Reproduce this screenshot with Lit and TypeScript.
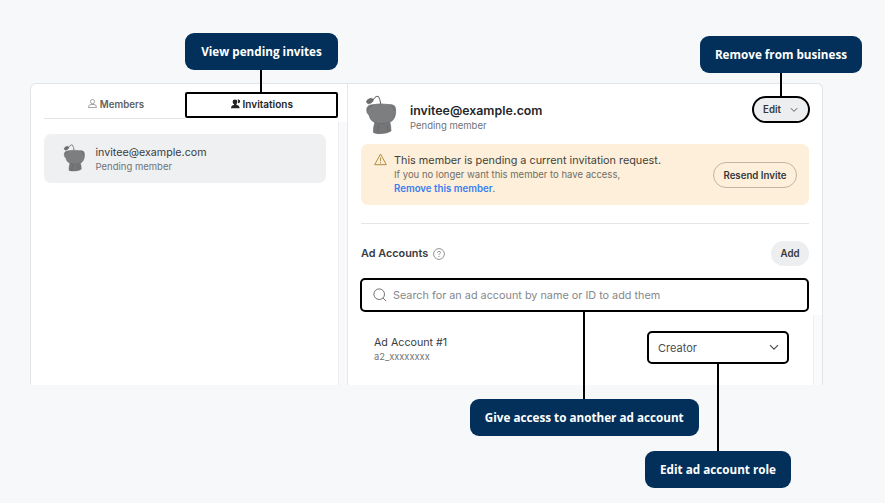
import { LitElement, html, css, svg } from "lit";
import { customElement, property } from "lit/decorators.js";

@customElement("snoo-avatar")
export class SnooAvatar extends LitElement {
  static styles = css`
    :host { display: block; }
    svg { display: block; width: 100%; height: 100%; }
  `;
  render() {
    return html`<svg viewBox="0 0 32 40">
      <path d="M7.500 4.800 Q9.400 4.200 10 2.300 Q12 .8 13.400 1.400 Q15 4 15.800 9" fill="none" stroke="#5b5c5e" stroke-width="1" stroke-linejoin="round"/>
      <ellipse cx="4.900" cy="6" rx="3.500" ry="2.300" transform="rotate(-28 4.900 6)" fill="#6d6e70" stroke="#58595b" stroke-width=".5"/>
      <path d="M10 27 Q8.400 31 8.400 37.400 Q12 39.400 17 38.400 Q22 38.600 26 36 Q26 31 24.500 26Z" fill="#757678" stroke="#5f6062" stroke-width=".6"/>
      <path d="M2.400 12 Q3.800 9.600 8 9.700 Q15 8.200 23 9.500 Q28 9.200 29.800 11.200 Q31 13.500 30.600 18 Q30.200 23.600 26.500 26.300 Q22 29 15 28.600 Q9 28.400 5.800 24.500 Q4.500 22 4 20 Q1.800 18.800 1.800 15.800 Q1.600 13.300 2.400 12Z" fill="#7d7e80" stroke="#66676a" stroke-width=".7"/>
      <path d="M2.600 14.800 Q3.700 12 7.500 10.500 M26 10.500 Q28.800 12 29.400 16 M13.500 30 L12.500 37 M22 30 L23 36.500" fill="none" stroke="#626366" stroke-width=".7"/>
    </svg>`;
  }
}

@customElement("call-out")
export class CallOut extends LitElement {
  @property() label = "";
  static styles = css`
    :host {
      position: absolute;
      box-sizing: border-box;
      height: 37px;
      padding-bottom: 2px;
      display: flex;
      align-items: center;
      justify-content: center;
      border-radius: 9px;
      background: #02305a;
      color: #fff;
      font: 700 11.700px/16px "Open Sans", "Noto Sans", sans-serif;
      white-space: nowrap;
    }
  `;
  render() {
    return html`<span>${this.label}</span>`;
  }
}

const chevron = svg`<path d="M1 1.200 L5 5.200 L9 1.200" fill="none" stroke="currentColor" stroke-width="1.200"/>`;

@customElement("app-root")
export class AppRoot extends LitElement {
  static styles = css`
    :host {
      display: block;
      position: relative;
      box-sizing: border-box;
      width: 885px;
      height: 503px;
      padding: 83px 62px 0 30px;
      overflow: hidden;
      background: #f7f8fa;
      font-family: Inter, "Liberation Sans", sans-serif;
      color: #393c3f;
      white-space: nowrap;
    }
    svg { display: block; flex: none; }
    .panel {
      box-sizing: border-box;
      width: 793px;
      height: 302px;
      display: flex;
      border: 1px solid #e2e5e8;
      border-bottom: 0;
      border-radius: 6px 6px 0 0;
      background: #fff;
      overflow: hidden;
    }
    .side { width: 307px; padding: 8px 0 0 12.500px; box-sizing: border-box; }
    .gutter {
      box-sizing: border-box;
      width: 11px;
      border-right: 1px solid #e6e8ea;
      padding-top: 38px;
      display: flex;
    }
    .gutter-fill { flex: 1; border-left: 1px solid #ebedef; background: #f9f9fb; }
    .tabs { display: flex; width: 295px; height: 27px; }
    .tab {
      box-sizing: border-box;
      display: flex;
      align-items: center;
      justify-content: center;
      gap: 3px;
      font-size: 9.700px;
      line-height: 14px;
      font-weight: 600;
    }
    .members { width: 141px; border-bottom: 1px solid #e3e6e8; color: #5c5f62; padding: 0 0 2px 4px; }
    .members span { padding-top: 1px; }
    .members svg { margin-bottom: 1px; }
    .invitations {
      flex: none;
      width: 153.500px;
      height: 26px;
      border: 2px solid #000;
      border-radius: 2px;
      color: #222426;
      padding: 0 0 2px 1px;
      font-size: 10px;
      gap: 2px;
    }
    .person {
      box-sizing: border-box;
      display: flex;
      align-items: center;
      width: 282.500px;
      height: 49px;
      margin-top: 15px;
      padding-left: 19.500px;
      border-radius: 7px;
      background: #eef0f2;
    }
    .person snoo-avatar { width: 22.500px; height: 28px; margin: -1px 10px 0 0; }
    .name { font-size: 10.700px; line-height: 15px; }
    .sub { font-size: 9.500px; line-height: 13px; color: #707376; }
    .main { flex: 1; padding: 11px 12px 0 13px; display: flex; flex-direction: column; position: relative; }
    .head { display: flex; height: 49px; align-items: flex-start; width: 449px; }
    .head snoo-avatar { width: 32px; height: 40px; margin-left: 4px; }
    .head .who { margin: 7px 0 0 13px; flex: 1; }
    .head .name { font-size: 12.350px; line-height: 17px; font-weight: 600; color: #242628; }
    .head .sub { line-height: 13px; }
    .pill {
      box-sizing: border-box;
      display: flex;
      align-items: center;
      justify-content: center;
      border-radius: 14px;
      background: #eceef0;
      font-size: 9.700px;
      line-height: 14px;
      font-weight: 600;
      color: #35383a;
    }
    .edit { width: 58px; height: 27px; border: 2px solid #000; gap: 9px; margin-top: 1px; padding-right: 1px; }
    .edit svg { color: #55585b; }
    .notice {
      box-sizing: border-box;
      display: flex;
      width: 448px;
      height: 61px;
      padding: 9px 12px 0 12.500px;
      border-radius: 7px;
      background: #fdefda;
    }
    .notice .copy { flex: 1; margin-left: 7.500px; font-size: 9.500px; line-height: 14px; color: #716e66; }
    .notice .title { font-size: 10.850px; line-height: 14px; padding-bottom: 1px; color: #444239; }
    .notice .link { font-size: 9.700px; }
    .notice b { color: #3b7df0; font-weight: 600; }
    .resend { width: 84px; height: 26px; margin-top: 9px; padding-top: 1px; background: transparent; border: 1px solid #bfb5a5; }
    .rule { height: 1px; width: 448px; margin-top: 18px; background: #e3e6e8; }
    .section { display: flex; align-items: center; height: 25px; margin-top: 17px; width: 448px; gap: 5px; }
    .section .heading { font-size: 10.850px; font-weight: 600; padding-bottom: 1px; }
    .add { width: 38px; height: 25px; margin-left: auto; padding-top: 1px; }
    .search {
      box-sizing: border-box;
      display: flex;
      align-items: center;
      width: 449px;
      height: 34px;
      margin: 12px 0 0 -1px;
      padding-left: 11px;
      gap: 6px;
      border: 2px solid #000;
      border-radius: 5px;
      font-size: 10.830px;
      color: #85888b;
    }
    .account { display: flex; width: 428px; margin-top: 19px; padding-left: 13px; box-sizing: border-box; }
    .account .info { flex: 1; padding-top: 4px; }
    .account .sub { font-size: 9.300px; line-height: 14px; }
    .select {
      box-sizing: border-box;
      display: flex;
      align-items: center;
      justify-content: space-between;
      width: 142px;
      height: 33px;
      padding: 0 8px 0 9px;
      border: 2px solid #000;
      border-radius: 5px;
      font-size: 11px;
      color: #4a4d50;
    }
    .track {
      position: absolute;
      right: 0;
      top: 231px;
      bottom: 0;
      width: 9px;
      box-sizing: border-box;
      border-left: 1px solid #efefef;
      background: #fafafa;
    }
    .line { position: absolute; width: 2px; background: #000; }
    .l1 { left: 260px; top: 69px; height: 24px; }
    .l2 { left: 780px; top: 72px; height: 25px; }
    .l3 { left: 583px; top: 311px; height: 89px; }
    .l4 { left: 717px; top: 363px; height: 89px; }
    .c1 { left: 185px; top: 33px; width: 153px; }
    .c2 { left: 700px; top: 36px; width: 162px; }
    .c3 { left: 469.500px; top: 399px; width: 229.500px; }
    .c4 { left: 645px; top: 451px; width: 146px; }
  `;

  render() {
    return html`
      <div class="panel">
        <div class="side">
          <div class="tabs">
            <div class="tab members">
              <svg width="9" height="9" viewBox="0 0 9 9" fill="none" stroke="#8b8e90" stroke-width=".8">
                <circle cx="4.500" cy="2.600" r="2.100"/>
                <path d="M.5 8.500 Q.5 5.500 3 5.500 H6 Q8.500 5.500 8.500 8.500Z"/>
              </svg>
              <span>Members</span>
            </div>
            <div class="tab invitations">
              <svg width="10" height="10" viewBox="0 0 10 10" fill="#222426">
                <circle cx="4" cy="3" r="2.400"/>
                <path d="M0 9.300 Q0 6.200 3 6 V5 H5.500 V6 Q8.600 6.200 8.600 9.300Z"/>
                <path d="M6.600 .5 Q9.200 .2 9.200 2.300 Q9.200 4.400 6.900 4.300 Q7.600 2.400 6.600 .5Z"/>
              </svg>
              <span>Invitations</span>
            </div>
          </div>
          <div class="person">
            <snoo-avatar></snoo-avatar>
            <div>
              <div class="name">invitee@example.com</div>
              <div class="sub">Pending member</div>
            </div>
          </div>
        </div>
        <div class="gutter"><div class="gutter-fill"></div></div>
        <div class="main">
          <div class="head">
            <snoo-avatar></snoo-avatar>
            <div class="who">
              <div class="name">invitee@example.com</div>
              <div class="sub">Pending member</div>
            </div>
            <div class="pill edit"><span>Edit</span><svg width="8" height="6" viewBox="0 0 10 7">${chevron}</svg></div>
          </div>
          <div class="notice">
            <svg width="13" height="13" viewBox="0 0 13 13" fill="none" stroke="#b08c3e" stroke-width="1">
              <path d="M6.500 1 L12.300 11.700 H.7Z" stroke-linejoin="round"/>
              <path d="M6.500 4.500 V8.300 M6.500 9.200 V10.400"/>
            </svg>
            <div class="copy">
              <div class="title">This member is pending a current invitation request.</div>
              <div class="text">If you no longer want this member to have access,</div>
              <div class="link"><b>Remove this member</b>.</div>
            </div>
            <div class="pill resend">Resend Invite</div>
          </div>
          <div class="rule"></div>
          <div class="section">
            <span class="heading">Ad Accounts</span>
            <svg width="12" height="12" viewBox="0 0 12 12" fill="none" stroke="#85888b" stroke-width=".9">
              <circle cx="6" cy="6" r="5.400"/>
              <path d="M4.500 4.800 Q4.500 3.400 6 3.400 Q7.500 3.400 7.500 4.600 Q7.500 5.400 6.600 5.800 Q6 6.100 6 7.100 M6 8 V9"/>
            </svg>
            <div class="pill add">Add</div>
          </div>
          <div class="search">
            <svg width="14" height="14" viewBox="0 0 14 14" fill="none" stroke="#6d7073" stroke-width="1">
              <circle cx="6.200" cy="6.200" r="5.300"/>
              <path d="M10 10 L13.200 13.200"/>
            </svg>
            <span>Search for an ad account by name or ID to add them</span>
          </div>
          <div class="account">
            <div class="info">
              <div class="name">Ad Account #1</div>
              <div class="sub">a2_xxxxxxxx</div>
            </div>
            <div class="select"><span>Creator</span><svg width="10" height="7" viewBox="0 0 10 7">${chevron}</svg></div>
          </div>
          <div class="track"></div>
        </div>
      </div>
      <div class="line l1"></div>
      <div class="line l2"></div>
      <div class="line l3"></div>
      <div class="line l4"></div>
      <call-out class="c1" label="View pending invites"></call-out>
      <call-out class="c2" label="Remove from business"></call-out>
      <call-out class="c3" label="Give access to another ad account"></call-out>
      <call-out class="c4" label="Edit ad account role"></call-out>
    `;
  }
}
